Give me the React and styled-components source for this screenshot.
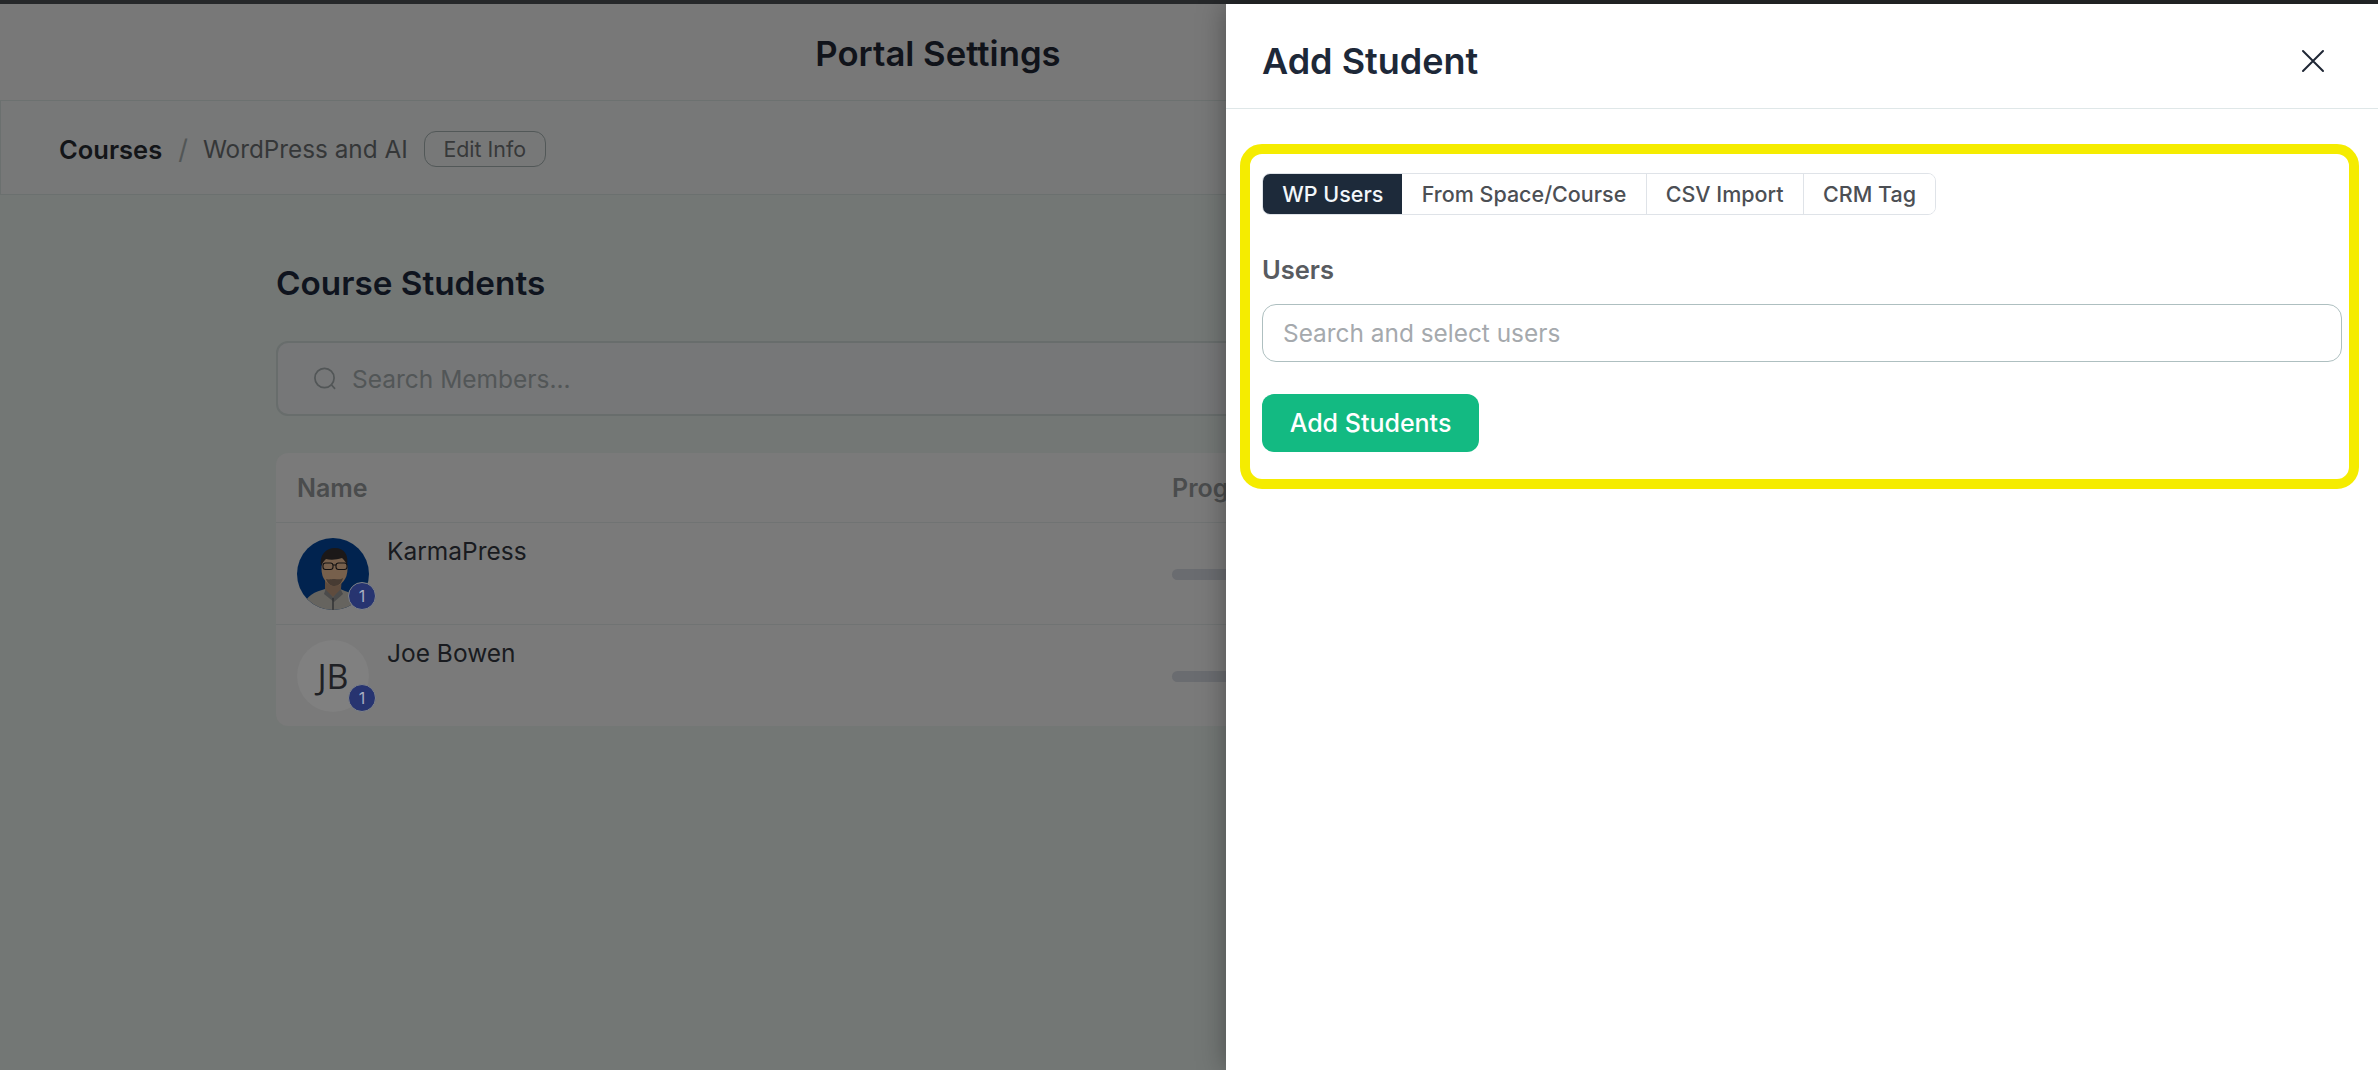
import React from "react";
import styled, { createGlobalStyle } from "styled-components";

const GlobalStyle = createGlobalStyle`
    * {box-sizing:border-box}
    html, body {margin:0; padding:0; background:#737775; font-family:Inter, "Liberation Sans", sans-serif}
    body {overflow:hidden}
`;

const Screen = styled.div`
    position:relative; display:flex; flex-direction:column;
    width:2378px; height:1070px; overflow:hidden; background:#737775;
`;

const TopEdge = styled.div`
    flex:none; height:4px; background:#26282a;
`;

const PageHeader = styled.header`
    flex:none; display:flex; align-items:center; justify-content:center;
    height:97px; padding:2px 502px 0 0; background:#787878; border-bottom:1px solid #6c7170;
`;

const PageTitle = styled.h1`
    margin:0; font-size:34.7px; font-weight:600; color:#10131a;
`;

const Breadcrumb = styled.nav`
    flex:none; display:flex; align-items:center;
    height:94px; padding:3px 0 0 58px; background:#777878;
    border-left:1px solid #6b706f; border-bottom:1px solid #6b706f;
`;

const CrumbRoot = styled.span`
    font-size:25.5px; font-weight:600; color:#131518;
`;

const CrumbSlash = styled.span`
    margin:0 15px 0 16px; font-size:27px; color:#525656;
`;

const CrumbPage = styled.span`
    font-size:24.3px; color:#353738;
`;

const EditButton = styled.button`
    margin-left:16px; height:36px; width:122px; padding:0; background:transparent;
    border:1px solid #525858; border-radius:12px;
    font:400 21.4px Inter, sans-serif; color:#37393a;
`;

const Content = styled.main`
    flex:1; padding:68px 0 0 276px;
`;

const SectionTitle = styled.h2`
    margin:0 0 38px; font-size:33.3px; line-height:40px; font-weight:600; color:#0f141e;
`;

const SearchBox = styled.div`
    display:flex; align-items:center; gap:15px;
    width:1800px; height:75px; padding-left:35px; background:#767778;
    border:2px solid #686d6c; border-radius:12px;
`;

const SearchText = styled.span`
    font-size:24.5px; color:#525657;
`;

const Table = styled.section`
    width:1800px; margin-top:37px; background:#7a7a7a; border-radius:12px;
`;

const Row = styled.div`
    display:grid; grid-template-columns:896px 1fr;
    height:${props => props.$height}px;
    &:not(:last-child) {border-bottom:1px solid #707373}
`;

const HeadCell = styled.div`
    padding:${props => props.$first ? "0 0 0 21px" : "0"};
    align-self:center;
    font-size:25px; font-weight:600; color:#4a4c4d;
`;

const NameCell = styled.div`
    display:flex; gap:18px; padding:14px 0 0 21px;
`;

const NameText = styled.span`
    font-size:24.5px; line-height:28px; color:#191b20;
`;

const ProgressCell = styled.div`
    padding-top:${props => props.$top}px;
`;

const ProgressTrack = styled.div`
    width:400px; height:11px; border-radius:6px; background:#6a6c70;
`;

const AvatarWrap = styled.div`
    position:relative; flex:none; width:72px; height:72px; margin-top:1px;
`;

const AvatarFace = styled.div`
    display:flex; align-items:center; justify-content:center;
    width:72px; height:72px; border-radius:50%; overflow:hidden; background:#808080;
    font-family:"Open Sans", sans-serif; font-size:34px; font-weight:400; color:#1f2125;
`;

const Badge = styled.span`
    position:absolute; right:-7px; bottom:0;
    display:flex; align-items:center; justify-content:center;
    width:28px; height:28px; border-radius:50%;
    background:#273470; border:1px solid #808489;
    font-size:16px; color:#a8aec2;
`;

const Drawer = styled.aside`
    position:absolute; top:4px; right:0; bottom:0; width:1152px;
    display:flex; flex-direction:column; background:#fff;
    box-shadow:0 0 26px rgba(0,0,0,0.35);
`;

const DrawerHeader = styled.div`
    flex:none; display:flex; align-items:center; justify-content:space-between;
    height:105px; padding:9px 53px 0 36px; border-bottom:1px solid #dfe7e8;
`;

const DrawerTitle = styled.h2`
    margin:0; font-size:36px; font-weight:600; color:#1d2838;
`;

const CloseButton = styled.button`
    display:flex; width:24px; height:24px; padding:0; background:none; border:0;
`;

const Highlight = styled.div`
    height:345px; margin:35px 19px 0 14px; padding:19px 7px 0 12px;
    border:10px solid #f5ec00; border-radius:22px;
`;

const Tabs = styled.div`
    display:inline-flex; height:42px; border:1px solid #dfe3e8; border-radius:8px; overflow:hidden;
`;

const Tab = styled.button`
    height:100%; padding:0 ${props => props.$pad}px; border:0;
    border-left:${props => props.$divider ? "1px solid #dfe3e8" : "0"};
    background:${props => props.$active ? "#1d2a3a" : "#fff"};
    color:${props => props.$active ? "#f3f7fa" : "#4c4f54"};
    font:500 21.5px Inter, sans-serif;
`;

const FieldLabel = styled.label`
    display:block; margin:40px 0 19px; font-size:25.5px; line-height:30px; font-weight:600; color:#585b60;
`;

const UsersInput = styled.input`
    display:block; width:100%; height:58px; padding:0 20px;
    border:1px solid #aebfc0; border-radius:14px; outline:0;
    font:400 24.4px Inter, sans-serif; color:#333;
    &::placeholder {color:#a5a9ad; opacity:1}
`;

const SubmitButton = styled.button`
    display:block; margin-top:32px; width:217px; height:58px; padding:0;
    background:#13ba82; border:0; border-radius:12px;
    font:500 25px Inter, sans-serif; color:#fff;
`;

const SearchIcon = () => (
    <svg width="24" height="24" viewBox="0 0 24 24" fill="none" stroke="#525657" strokeWidth="1.7" strokeLinecap="round">
        <circle cx="11.5" cy="11" r="9.6" />
        <path d="M18.6 18l3 3.4" />
    </svg>
);

const CloseIcon = () => (
    <svg width="24" height="24" viewBox="0 0 24 24" fill="none" stroke="#1f2735" strokeWidth="2" strokeLinecap="round">
        <path d="M2 2l20 20M22 2L2 22" />
    </svg>
);

const PersonPhoto = () => (
    <svg width="72" height="72" viewBox="0 0 72 72">
        <rect width="72" height="72" fill="#01234f" />
        <path d="M5 72c2-11 9-17 20-20l6-2h10l7 3c10 3 16 9 19 19z" fill="#66645f" />
        <path d="M29 50l7 9 7-9 3 6-9 8-10-8z" fill="#4b4b4b" />
        <path d="M36 60v12" stroke="#2e3033" strokeWidth="1.4" />
        <path d="M28 38v13l8 8 8-8 1-13z" fill="#5f4c3e" />
        <ellipse cx="37.5" cy="31" rx="13" ry="17" fill="#77604c" />
        <path d="M24 28c-2-11 5-18 14-18 9 0 14 7 12 17-1-3-3-5-5-7-6 2-12 2-16 1-2 2-4 4-5 7z" fill="#1b1818" />
        <path d="M29 41c3 1 5 0 8.500 0s6 1 8.500-1c-1 5-4.500 8-8.500 8s-7-2.500-8.500-7z" fill="#473b33" />
        <rect x="26" y="25" width="10" height="6.500" rx="2.500" fill="none" stroke="#141212" strokeWidth="1.100" />
        <rect x="39" y="25" width="11" height="6.500" rx="2.500" fill="none" stroke="#141212" strokeWidth="1.100" />
        <path d="M36 27h3" stroke="#141212" strokeWidth="1" />
    </svg>
);

const tabs = [
    { label: "WP Users", pad: 19.2, active: true },
    { label: "From Space/Course", pad: 19.2 },
    { label: "CSV Import", pad: 19.2 },
    { label: "CRM Tag", pad: 19.2 }
];

const App = () => (
    <Screen>
        <GlobalStyle />
        <TopEdge />
        <PageHeader>
            <PageTitle>Portal Settings</PageTitle>
        </PageHeader>
        <Breadcrumb>
            <CrumbRoot>Courses</CrumbRoot>
            <CrumbSlash>/</CrumbSlash>
            <CrumbPage>WordPress and AI</CrumbPage>
            <EditButton>Edit Info</EditButton>
        </Breadcrumb>
        <Content>
            <SectionTitle>Course Students</SectionTitle>
            <SearchBox>
                <SearchIcon />
                <SearchText>Search Members...</SearchText>
            </SearchBox>
            <Table>
                <Row $height={70}>
                    <HeadCell $first>Name</HeadCell>
                    <HeadCell>Progress</HeadCell>
                </Row>
                <Row $height={102}>
                    <NameCell>
                        <AvatarWrap>
                            <AvatarFace><PersonPhoto /></AvatarFace>
                            <Badge>1</Badge>
                        </AvatarWrap>
                        <NameText>KarmaPress</NameText>
                    </NameCell>
                    <ProgressCell $top={46}><ProgressTrack /></ProgressCell>
                </Row>
                <Row $height={101}>
                    <NameCell>
                        <AvatarWrap>
                            <AvatarFace>JB</AvatarFace>
                            <Badge>1</Badge>
                        </AvatarWrap>
                        <NameText>Joe Bowen</NameText>
                    </NameCell>
                    <ProgressCell $top={46}><ProgressTrack /></ProgressCell>
                </Row>
            </Table>
        </Content>
        <Drawer>
            <DrawerHeader>
                <DrawerTitle>Add Student</DrawerTitle>
                <CloseButton><CloseIcon /></CloseButton>
            </DrawerHeader>
            <Highlight>
                <Tabs>
                    {tabs.map((tab, index) => (
                        <Tab key={tab.label} $active={tab.active} $pad={tab.pad} $divider={index > 1}>{tab.label}</Tab>
                    ))}
                </Tabs>
                <FieldLabel>Users</FieldLabel>
                <UsersInput placeholder="Search and select users" />
                <SubmitButton>Add Students</SubmitButton>
            </Highlight>
        </Drawer>
    </Screen>
);

export default App;
